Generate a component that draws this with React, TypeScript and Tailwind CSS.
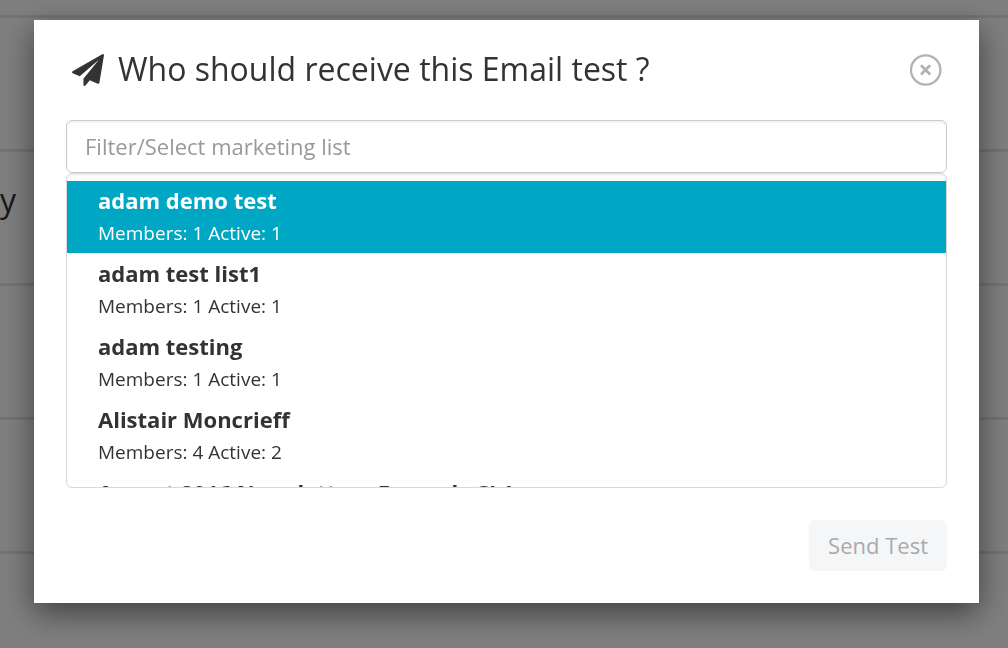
import { useState } from 'react'

const lists = [
  { name: 'adam demo test', members: 1, active: 1 },
  { name: 'adam test list1', members: 1, active: 1 },
  { name: 'adam testing', members: 1, active: 1 },
  { name: 'Alistair Moncrieff', members: 4, active: 2 },
  { name: 'August 2016 Newsletter - Example SL1', members: 2, active: 2 },
]

const pageRows = ['', 'y', '', '', '']

function PaperPlane() {
  return (
    <svg className="w-8 h-8 shrink-0" viewBox="0 0 1792 1792" fill="currentColor" aria-hidden="true">
      <path d="M1764 11q33 24 27 64l-256 1536q-5 29-32 45-14 8-31 8-11 0-24-5l-453-185-242 295q-18 23-49 23-13 0-22-4-19-7-30.500-23.500t-11.500-36.500v-349l864-1059-1069 925-395-162q-37-14-40-55-2-40 32-59l1664-960q15-9 32-9 20 0 36 11z" />
    </svg>
  )
}

function CloseIcon() {
  return (
    <svg className="w-8 h-8" viewBox="0 0 32 32" fill="none" stroke="currentColor" aria-hidden="true">
      <circle cx="15.700" cy="16" r="14.700" strokeWidth="2.300" />
      <path d="M11 11.300l9.200 9.200M20.200 11.300l-9.200 9.200" strokeWidth="2.800" />
    </svg>
  )
}

export default function App() {
  const [filter, setFilter] = useState('')
  const [selected, setSelected] = useState(0)

  const visible = lists.filter((l) => l.name.toLowerCase().includes(filter.toLowerCase()))

  return (
    <div className="relative h-screen overflow-hidden bg-white font-['Open_Sans',sans-serif] text-[#333]">
      {/* Page behind the dialog */}
      <div className="pt-[15px]">
        {pageRows.map((text, index) => (
          <div key={index} className="h-[134px] border-t-3 border-[#e6e6e6] pt-6 text-[32px] leading-12">
            {text}
          </div>
        ))}
      </div>

      {/* Backdrop + dialog */}
      <div className="fixed inset-0 overflow-hidden bg-black/50 pt-5 pr-[29px] pl-[34px]">
        <div
          role="dialog"
          aria-labelledby="dialog-title"
          className="bg-white p-8 shadow-[0_10px_30px_rgba(0,0,0,0.5)]"
        >
          <div className="flex h-9 items-center justify-between pr-[5px] pl-[6px]">
            <div className="flex items-center gap-[14px]">
              <PaperPlane />
              <h1 id="dialog-title" className="pb-[2px] text-[32px] leading-8">Who should receive this Email test ?</h1>
            </div>
            <button type="button" aria-label="Close" className="text-[#b3b3b3]">
              <CloseIcon />
            </button>
          </div>

          <div className="mt-8">
            <input
              type="text"
              aria-label="Filter/Select marketing list"
              placeholder="Filter/Select marketing list"
              value={filter}
              onChange={(e) => setFilter(e.target.value)}
              className="block h-[53px] w-full rounded-md border border-[#ccc] px-[18px] pb-[2px] text-[22px] shadow-[inset_0_2px_2px_rgba(0,0,0,0.05)] outline-none placeholder:text-[#999]"
            />
            <ul
              role="listbox"
              aria-label="Marketing lists"
              className="flex h-[315px] flex-col gap-px overflow-y-auto rounded-md border border-[#d9d9d9] pt-[7px] shadow-[inset_0_2px_2px_rgba(0,0,0,0.05)] [scrollbar-width:none]"
            >
              {visible.map((list, index) => (
                <li
                  key={list.name}
                  role="option"
                  aria-selected={index === selected}
                  onMouseEnter={() => setSelected(index)}
                  className={`h-[72px] shrink-0 px-[31px] pt-[3px] ${index === selected ? 'bg-[#00a7c5] text-white' : ''}`}
                >
                  <div className="text-[22px] leading-8 font-bold">{list.name}</div>
                  <div className="text-[19px] leading-[34px]">
                    Members: {list.members} Active: {list.active}
                  </div>
                </li>
              ))}
            </ul>
          </div>

          <div className="mt-8 flex justify-end">
            <button type="button" disabled className="h-[51px] rounded-md bg-[#f4f6f8] px-[19px] text-[22px] text-[#aaa]">
              Send Test
            </button>
          </div>
        </div>
      </div>
    </div>
  )
}
